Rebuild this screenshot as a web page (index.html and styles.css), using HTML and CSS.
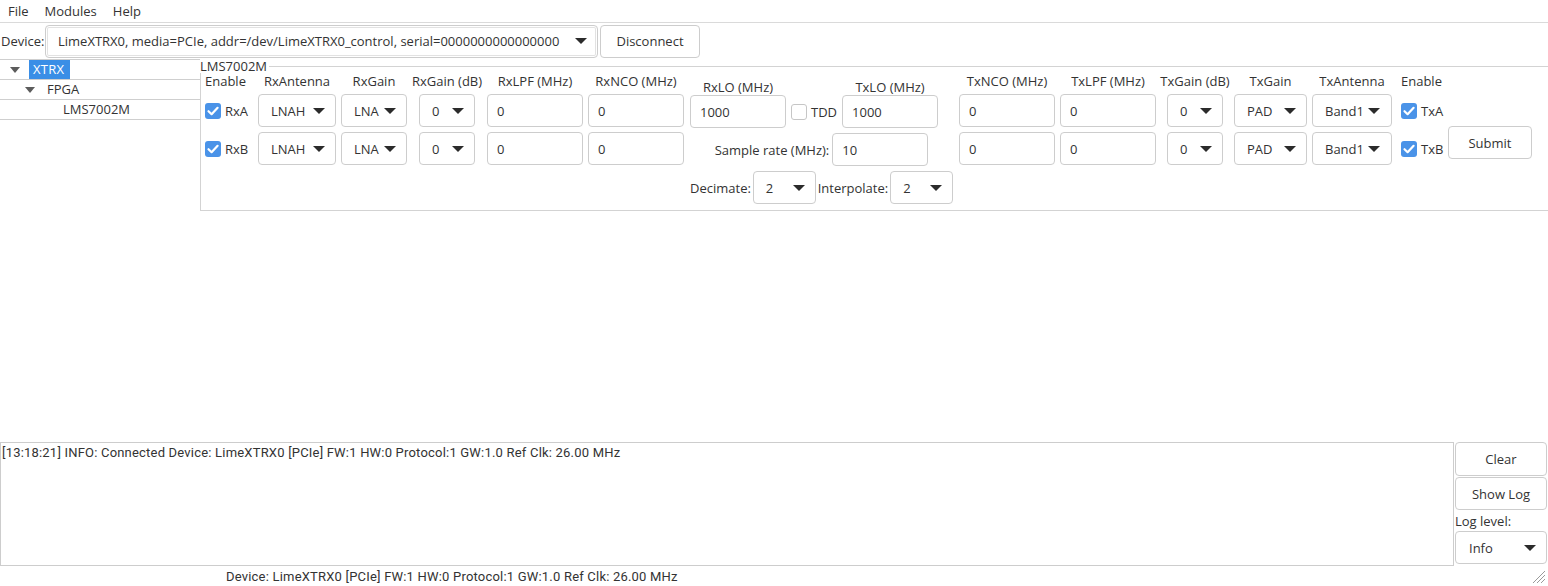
FILE: index.html
```html
<!DOCTYPE html>
<html>
<head>
<meta charset="utf-8">
<title>LimeSuite</title>
<link rel="stylesheet" href="styles.css">
</head>
<body>
<div class="app">
  <div class="menubar">
    <span class="menu">File</span>
    <span class="menu">Modules</span>
    <span class="menu">Help</span>
  </div>

  <div class="devrow">
    <span class="devlabel">Device:</span>
    <div class="combo devcombo"><span>LimeXTRX0, media=PCIe, addr=/dev/LimeXTRX0_control, serial=0000000000000000</span><span class="arrow"></span></div>
    <button class="btn disc">Disconnect</button>
  </div>

  <div class="main">
    <div class="tree">
      <div class="trow l0"><span class="tarrow"></span><span class="tlabel sel">XTRX</span></div>
      <div class="trow l1"><span class="tarrow"></span><span class="tlabel">FPGA</span></div>
      <div class="trow l2"><span class="tlabel">LMS7002M</span></div>
    </div>

    <div class="group">
      <span class="gtitle">LMS7002M</span>

      <div class="blockA">
        <div class="hdr left">Enable</div>
        <div class="hdr">RxAntenna</div>
        <div class="hdr">RxGain</div>
        <div class="hdr">RxGain (dB)</div>
        <div class="hdr">RxLPF (MHz)</div>
        <div class="hdr">RxNCO (MHz)</div>

        <div class="cell"><span class="chk"><svg width="16" height="16" viewBox="0 0 16 16"><polyline points="3.5,8.2 6.6,11.2 12.6,4.8" fill="none" stroke="#fff" stroke-width="2.2" stroke-linecap="round" stroke-linejoin="round"/></svg></span><span>RxA</span></div>
        <div class="cell center"><div class="combo w78"><span>LNAH</span><span class="arrow"></span></div></div>
        <div class="cell center"><div class="combo w66"><span>LNA</span><span class="arrow"></span></div></div>
        <div class="cell center"><div class="combo w56"><span>0</span><span class="arrow"></span></div></div>
        <div class="cell"><div class="input">0</div></div>
        <div class="cell"><div class="input">0</div></div>

        <div class="cell"><span class="chk"><svg width="16" height="16" viewBox="0 0 16 16"><polyline points="3.5,8.2 6.6,11.2 12.6,4.8" fill="none" stroke="#fff" stroke-width="2.2" stroke-linecap="round" stroke-linejoin="round"/></svg></span><span>RxB</span></div>
        <div class="cell center"><div class="combo w78"><span>LNAH</span><span class="arrow"></span></div></div>
        <div class="cell center"><div class="combo w66"><span>LNA</span><span class="arrow"></span></div></div>
        <div class="cell center"><div class="combo w56"><span>0</span><span class="arrow"></span></div></div>
        <div class="cell"><div class="input">0</div></div>
        <div class="cell"><div class="input">0</div></div>
      </div>

      <div class="blockB">
        <div class="lorow">
          <div class="hdr">RxLO (MHz)</div>
          <div></div>
          <div class="hdr">TxLO (MHz)</div>
          <div class="cell"><div class="input">1000</div></div>
          <div class="cell tdd"><span class="chk off"></span><span>TDD</span></div>
          <div class="cell"><div class="input">1000</div></div>
        </div>
        <div class="srrow">
          <span>Sample rate (MHz):</span>
          <div class="input">10</div>
        </div>
        <div class="decrow">
          <span>Decimate:</span>
          <div class="combo w65"><span>2</span><span class="arrow"></span></div>
          <span>Interpolate:</span>
          <div class="combo w65"><span>2</span><span class="arrow"></span></div>
        </div>
      </div>

      <div class="blockC">
        <div class="hdr">TxNCO (MHz)</div>
        <div class="hdr">TxLPF (MHz)</div>
        <div class="hdr">TxGain (dB)</div>
        <div class="hdr">TxGain</div>
        <div class="hdr">TxAntenna</div>
        <div class="hdr left en">Enable</div>
        <div></div>

        <div class="cell"><div class="input">0</div></div>
        <div class="cell"><div class="input">0</div></div>
        <div class="cell center"><div class="combo w56"><span>0</span><span class="arrow"></span></div></div>
        <div class="cell center"><div class="combo w73"><span>PAD</span><span class="arrow"></span></div></div>
        <div class="cell center"><div class="combo w80"><span>Band1</span><span class="arrow"></span></div></div>
        <div class="cell en"><span class="chk"><svg width="16" height="16" viewBox="0 0 16 16"><polyline points="3.5,8.2 6.6,11.2 12.6,4.8" fill="none" stroke="#fff" stroke-width="2.2" stroke-linecap="round" stroke-linejoin="round"/></svg></span><span>TxA</span></div>
        <button class="btn submit">Submit</button>

        <div class="cell"><div class="input">0</div></div>
        <div class="cell"><div class="input">0</div></div>
        <div class="cell center"><div class="combo w56"><span>0</span><span class="arrow"></span></div></div>
        <div class="cell center"><div class="combo w73"><span>PAD</span><span class="arrow"></span></div></div>
        <div class="cell center"><div class="combo w80"><span>Band1</span><span class="arrow"></span></div></div>
        <div class="cell en"><span class="chk"><svg width="16" height="16" viewBox="0 0 16 16"><polyline points="3.5,8.2 6.6,11.2 12.6,4.8" fill="none" stroke="#fff" stroke-width="2.2" stroke-linecap="round" stroke-linejoin="round"/></svg></span><span>TxB</span></div>
      </div>
    </div>
  </div>

  <div class="logarea">
    <div class="logbox">[13:18:21] INFO: Connected Device: LimeXTRX0 [PCIe] FW:1 HW:0 Protocol:1 GW:1.0 Ref Clk: 26.00 MHz</div>
    <div class="logside">
      <button class="btn clear">Clear</button>
      <button class="btn showlog">Show Log</button>
      <span class="loglabel">Log level:</span>
      <div class="combo w92 info"><span>Info</span><span class="arrow"></span></div>
    </div>
  </div>

  <div class="status">
    <span class="stext">Device: LimeXTRX0 [PCIe] FW:1 HW:0 Protocol:1 GW:1.0 Ref Clk: 26.00 MHz</span>
    <svg class="grip" width="16" height="16" viewBox="0 0 16 16"><line x1="15" y1="3" x2="3" y2="15" stroke="#9a9a9a" stroke-width="1"/><line x1="15" y1="7" x2="7" y2="15" stroke="#9a9a9a" stroke-width="1"/><line x1="15" y1="11" x2="11" y2="15" stroke="#9a9a9a" stroke-width="1"/></svg>
  </div>
</div>
</body>
</html>
```

FILE: styles.css
```css
* { box-sizing: border-box; }
html, body { margin: 0; padding: 0; background: #fff; }
body {
  font-family: "Open Sans", "Noto Sans", sans-serif;
  font-size: 13px;
  color: #333;
}
.app {
  display: flex;
  flex-direction: column;
  width: 1548px;
  height: 586px;
  overflow: hidden;
}

/* menu */
.menubar {
  height: 23px;
  border-bottom: 1px solid #dadada;
  display: flex;
  align-items: center;
}
.menu { padding: 0 8px; line-height: 22px; }

/* device row */
.devrow {
  height: 36px;
  display: flex;
  align-items: center;
  padding-left: 1px;
}
.devlabel { width: 44px; }
.combo {
  height: 33px;
  border: 1px solid #cdcdcd;
  border-radius: 4px;
  display: flex;
  align-items: center;
  justify-content: space-between;
  padding: 0 10px 0 12px;
  background: #fff;
  white-space: nowrap;
}
.arrow {
  width: 0;
  height: 0;
  border-left: 6px solid transparent;
  border-right: 6px solid transparent;
  border-top: 6px solid #2b2b2b;
  flex: none;
}
.devcombo {
  width: 553px;
  box-shadow: inset 0 0 0 1px #fff, inset 0 0 0 2px #e2e2e2;
}
.btn {
  height: 33px;
  border: 1px solid #cdcdcd;
  border-radius: 4px;
  background: #fff;
  font: inherit;
  color: inherit;
  padding: 0;
}
.disc { width: 100px; margin-left: 2px; }

/* main area */
.main {
  flex: 1;
  display: flex;
  align-items: flex-start;
}
.tree {
  width: 200px;
  flex: none;
  border-top: 1px solid #cfcfcf;
}
.trow {
  height: 20px;
  border-bottom: 1px solid #cfcfcf;
  display: flex;
  align-items: stretch;
}
.tarrow {
  width: 0;
  height: 0;
  align-self: center;
  border-left: 5.5px solid transparent;
  border-right: 5.5px solid transparent;
  border-top: 6px solid #5c5c5c;
  margin-right: 9px;
}
.l0 { padding-left: 10px; }
.l1 { padding-left: 25px; }
.l2 { padding-left: 60px; }
.tlabel { line-height: 19px; padding: 0 3px; }
.tlabel.sel { background: #3a8ee6; color: #fff; padding: 0 6px 0 4px; letter-spacing: 0.3px; }

/* group box */
.group {
  position: relative;
  flex: 1;
  margin-top: 7px;
  border: 1px solid #d3d3d3;
  border-right: none;
  padding: 7px 0 6px 4px;
  display: flex;
  gap: 6px;
  align-items: flex-start;
}
.gtitle {
  position: absolute;
  top: -8px;
  left: -1px;
  background: #fff;
  line-height: 14px;
  padding-right: 2px;
}
.hdr {
  line-height: 15px;
  display: flex;
  justify-content: center;
  white-space: nowrap;
}
.hdr.left { justify-content: flex-start; }
.cell { display: flex; align-items: center; white-space: nowrap; }
.cell.center { justify-content: center; }
.input {
  height: 33px;
  width: 96px;
  border: 1px solid #cdcdcd;
  border-radius: 4px;
  padding-left: 9px;
  display: flex;
  align-items: center;
  background: #fff;
}
.chk {
  width: 16px;
  height: 16px;
  border-radius: 3px;
  background: #4a93e8;
  margin-right: 4px;
  display: inline-flex;
  flex: none;
}
.chk.off { background: #fff; border: 1px solid #c6c6c6; }

.w56 { width: 56px; }
.w65 { width: 65px; }
.w66 { width: 66px; }
.w73 { width: 73px; }
.w78 { width: 78px; }
.w80 { width: 80px; padding-right: 11px; }
.w92 { width: 92px; }

.blockA {
  display: grid;
  grid-template-columns: 48px 78px 66px 70px 96px 96px;
  grid-template-rows: 15px 33px 33px;
  column-gap: 5px;
  row-gap: 5px;
}
.blockB {
  width: 263px;
  flex: none;
  padding-top: 6px;
  display: flex;
  flex-direction: column;
  gap: 5px;
}
.lorow {
  display: grid;
  grid-template-columns: 96px max-content 96px;
  grid-template-rows: 15px 33px;
  column-gap: 5px;
  justify-content: start;
}
.srrow {
  display: flex;
  justify-content: center;
  align-items: center;
  gap: 3px;
}
.decrow {
  display: flex;
  align-items: center;
  gap: 2px;
}
.blockC {
  display: grid;
  grid-template-columns: 96px 96px 68px 73px 80px 46px 84px;
  grid-template-rows: 15px 33px 33px;
  column-gap: 5px;
  row-gap: 5px;
}
.en { padding-left: 4px; }
.submit {
  grid-column: 7;
  grid-row: 2 / 4;
  align-self: end;
  margin-bottom: 6px;
  width: 84px;
}

/* log */
.logarea {
  height: 124px;
  display: flex;
  gap: 1px;
  padding-right: 1px;
}
.logbox {
  flex: 1;
  border: 1px solid #cdcdcd;
  padding: 2px 1px;
  font-family: Roboto, "Noto Sans", sans-serif;
  font-size: 13px;
  line-height: 15px;
  letter-spacing: 0.2px;
  white-space: nowrap;
}
.logside {
  width: 92px;
  display: flex;
  flex-direction: column;
}
.clear { height: 34px; margin-bottom: 1px; }
.showlog { height: 33px; }
.loglabel { height: 21px; line-height: 22px; }
.info { padding-left: 13px; }

/* status */
.status {
  position: relative;
  height: 20px;
  padding-left: 226px;
  display: flex;
  align-items: center;
}
.stext {
  font-family: Roboto, "Noto Sans", sans-serif;
  font-size: 13px;
  letter-spacing: 0.2px;
}
.grip {
  position: absolute;
  right: 2px;
  bottom: 2px;
}
```
